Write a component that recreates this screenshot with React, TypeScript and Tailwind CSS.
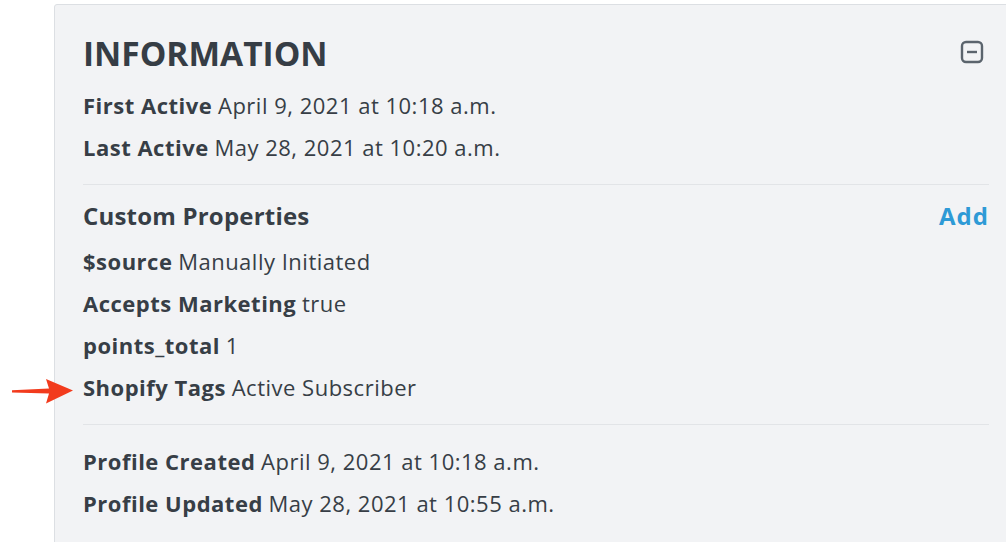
import React from 'react';

const rowClass = 'h-[42px] leading-[42px] text-[22px] text-[#373e46] whitespace-nowrap';

const Row: React.FC<{ label: string; value: string }> = ({ label, value }) => (
  <div className={rowClass}>
    <span className="font-bold tracking-[0.5px]">{label}</span>{' '}
    <span className="tracking-[0.5px]">{value}</span>
  </div>
);

const App: React.FC = () => {
  return (
    <div
      className="relative w-[1006px] h-[542px] overflow-hidden bg-white pl-[54px] pt-[4px]"
      style={{ fontFamily: '"Open Sans", Lato, sans-serif' }}
    >
      {/* red annotation arrow */}
      <svg className="absolute left-[10px] top-[376px]" width="66" height="30" viewBox="0 0 66 30">
        <path d="M2 14.2 L39 12.6 L36 3 L63 14.5 L36 27.5 L39 17.6 L2 16.4 Z" fill="#f23b1d" />
      </svg>

      <div className="w-[980px] h-[560px] bg-[#f2f3f5] border border-[#dcdfe3] rounded-[3px] pl-[28px] pr-[44px] pt-[24px]">
        <div className="flex items-center justify-between h-[48px] mb-[7px]">
          <h1 className="text-[33.5px] font-bold text-[#363d45]">INFORMATION</h1>
          <svg width="24" height="24" viewBox="0 0 24 24" className="mr-[5px] -mt-[2px]">
            <rect x="2" y="2" width="20" height="20" rx="4" fill="none" stroke="#5b646d" strokeWidth="2.4" />
            <line x1="7" y1="12" x2="17" y2="12" stroke="#5b646d" strokeWidth="2.4" />
          </svg>
        </div>

        <Row label="First Active" value="April 9, 2021 at 10:18 a.m." />
        <Row label="Last Active" value="May 28, 2021 at 10:20 a.m." />

        <div className="mt-[16px] border-t border-[#e2e4e7]" />

        <div className="flex items-center justify-between h-[48px] mt-[7px]">
          <span className="text-[24px] font-bold text-[#373e46] tracking-[0.2px]">Custom Properties</span>
          <button className="text-[24px] font-bold text-[#2e9ad6] tracking-[1px]">Add</button>
        </div>
        <Row label="$source" value="Manually Initiated" />
        <Row label="Accepts Marketing" value="true" />
        <Row label="points_total" value="1" />
        <Row label="Shopify Tags" value="Active Subscriber" />

        <div className="mt-[16px] border-t border-[#e2e4e7]" />

        <div className="mt-[15px]">
          <Row label="Profile Created" value="April 9, 2021 at 10:18 a.m." />
          <Row label="Profile Updated" value="May 28, 2021 at 10:55 a.m." />
        </div>
      </div>
    </div>
  );
};

export default App;
